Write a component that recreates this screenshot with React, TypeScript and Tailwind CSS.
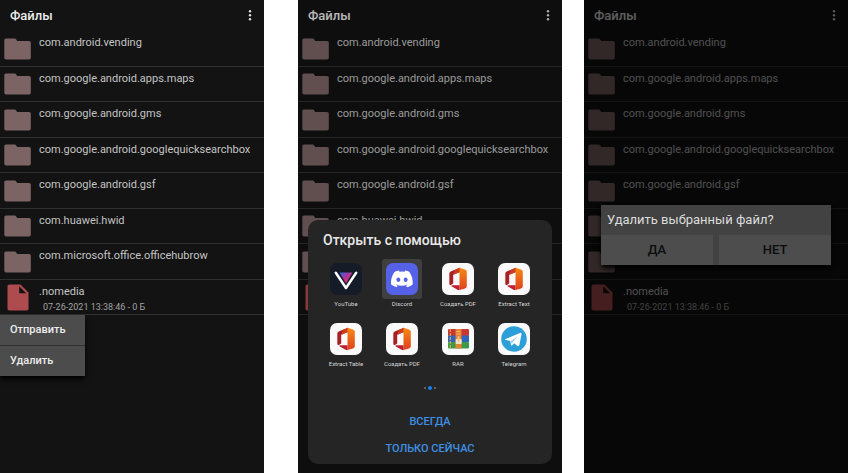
import { useId, type ReactNode } from "react";

const FOLDERS = [
  "com.android.vending",
  "com.google.android.apps.maps",
  "com.google.android.gms",
  "com.google.android.googlequicksearchbox",
  "com.google.android.gsf",
  "com.huawei.hwid",
  "com.microsoft.office.officehubrow",
];

function FolderIcon() {
  return (
    <svg viewBox="0 0 27 22" className="h-[22px] w-[27px]" aria-hidden="true">
      <path
        d="M2 .5h8.500c.9 0 1.200.3 1.700 1l1 1.500H25c1.200 0 1.800.7 1.800 1.800V19.500c0 1.200-.7 1.900-1.900 1.900H2.200C1 21.400.3 20.700.3 19.500V2.300C.3 1.200.9.5 2 .5z"
        fill="#7d6464"
      />
    </svg>
  );
}

function FileIcon() {
  return (
    <svg viewBox="0 0 22 27" className="h-[27px] w-[22px]" aria-hidden="true">
      <path
        d="M2.500.5h11L21.500 8.500v16c0 1.300-.7 2-2 2h-17c-1.300 0-2-.7-2-2v-22c0-1.300.7-2 2-2z"
        fill="#ad4b4e"
      />
      <path d="M12.200 2.300v7h7z" fill="#131313" />
    </svg>
  );
}

function Screen({ scrim, menu, children }: { scrim?: string; menu?: ReactNode; children?: ReactNode }) {
  return (
    <section className="relative min-w-0 flex-1 overflow-hidden bg-[#131313]">
      <header className="flex h-[31px] items-center justify-between px-[10px]">
        <h1 className="text-[13px] leading-4 font-medium text-[#ececec]">Файлы</h1>
        <button type="button" aria-label="Меню" className="flex h-4 w-2 items-center justify-center">
          <svg viewBox="0 0 4 12" className="h-3 w-1" fill="#dedede" aria-hidden="true">
            <circle cx="2" cy="1.200" r="1.200" />
            <circle cx="2" cy="5.200" r="1.200" />
            <circle cx="2" cy="9.200" r="1.200" />
          </svg>
        </button>
      </header>
      <div className="relative">
        <ul className="grid h-[284px] grid-rows-8">
          {FOLDERS.map((name) => (
            <li key={name} className="flex border-b border-[#303030] pl-1">
              <span className="flex w-[35px] shrink-0 items-end pb-[6px]">
                <FolderIcon />
              </span>
              <span className="pt-1 text-[11px] leading-4 whitespace-nowrap text-[#c4c4c4]">{name}</span>
            </li>
          ))}
          <li className="flex border-b border-[#303030] pl-[7px]">
            <span className="flex w-8 shrink-0 items-end pb-[3px]">
              <FileIcon />
            </span>
            <span className="flex flex-col whitespace-nowrap text-[#c4c4c4]">
              <span className="pt-1 text-[11px] leading-4">.nomedia</span>
              <span className="pl-1 text-[9px] leading-[15px] text-[#a2a2a2]">07-26-2021 13:38:46 - 0 Б</span>
            </span>
          </li>
        </ul>
        {menu}
      </div>
      {scrim && <div className={`absolute inset-0 ${scrim}`} />}
      {children}
    </section>
  );
}

function ContextMenu() {
  return (
    <div className="absolute top-full left-0 flex w-[85px] flex-col gap-px bg-[#303030] text-[11px] font-medium text-[#eeeeee] shadow-md shadow-black">
      <button type="button" className="h-[30px] bg-[#4c4c4c] px-[10px] text-left">Отправить</button>
      <button type="button" className="h-[30px] bg-[#4c4c4c] px-[10px] text-left">Удалить</button>
    </div>
  );
}

function VancedIcon() {
  const id = useId();
  return (
    <svg viewBox="0 0 32 32" className="size-8" aria-hidden="true">
      <defs>
        <linearGradient id={id} x1="0" y1="0" x2="1" y2="1">
          <stop offset="0" stopColor="#2c62e8" />
          <stop offset=".5" stopColor="#b63292" />
          <stop offset="1" stopColor="#f02b55" />
        </linearGradient>
      </defs>
      <rect width="32" height="32" rx="7" fill="#161c27" />
      <path d="M9.500 9.500h13L16 20.500z" fill={`url(#${id})`} />
      <path d="M5.800 9.800 16 25 26.200 9.800" fill="none" stroke="#fff" strokeWidth="2.500" strokeLinecap="round" strokeLinejoin="round" />
    </svg>
  );
}

function DiscordIcon() {
  return (
    <svg viewBox="0 0 32 32" className="size-8" aria-hidden="true">
      <rect width="32" height="32" rx="7" fill="#5562e8" />
      <path
        transform="translate(5 5) scale(.917)"
        fill="#fff"
        d="M20.317 4.370a19.791 19.791 0 0 0-4.885-1.515c-.21.375-.444.864-.608 1.250a18.270 18.270 0 0 0-5.487 0 12.640 12.640 0 0 0-.617-1.250A19.736 19.736 0 0 0 3.677 4.370C.533 9.046-.319 13.580.099 18.058a19.900 19.900 0 0 0 5.993 3.030c.462-.63.874-1.295 1.226-1.994a13.107 13.107 0 0 1-1.872-.892l.372-.292c3.928 1.793 8.180 1.793 12.062 0l.373.292a12.299 12.299 0 0 1-1.873.892c.36.698.772 1.362 1.225 1.993a19.839 19.839 0 0 0 6.002-3.030c.5-5.177-.838-9.674-3.549-13.660zM8.020 15.330c-1.182 0-2.157-1.085-2.157-2.419 0-1.333.956-2.419 2.157-2.419 1.210 0 2.176 1.095 2.157 2.420 0 1.333-.956 2.418-2.157 2.418zm7.975 0c-1.183 0-2.157-1.085-2.157-2.419 0-1.333.955-2.419 2.157-2.419 1.210 0 2.176 1.095 2.157 2.420 0 1.333-.946 2.418-2.157 2.418z"
      />
    </svg>
  );
}

function OfficeIcon() {
  const id = useId();
  return (
    <svg viewBox="0 0 32 32" className="size-8" aria-hidden="true">
      <defs>
        <linearGradient id={id} x1="0" y1="0" x2="0" y2="1">
          <stop offset="0" stopColor="#f58a16" />
          <stop offset="1" stopColor="#e0401c" />
        </linearGradient>
      </defs>
      <rect width="32" height="32" rx="7" fill="#fbfafa" />
      <path d="M18 4.800 9.200 8.200C8 8.700 7.300 9.600 7.300 11v9c0 2 .7 2.500 2 1.700l1.900-1.100V11.800L18 9z" fill="#a52326" />
      <path d="M18 4.800 13 6.700l-1.800 5.100L18 9z" fill="#cf3e1d" />
      <path d="M17.500 4.800 23 6.600c1.200.4 1.800 1.200 1.800 2.400v14c0 1.200-.6 2-1.800 2.400l-5.500 1.700z" fill={`url(#${id})`} />
      <path d="M9.700 22.300h7.800v4.800c-.7.100-1.400-.1-2-.4l-5.200-2.900c-.9-.5-1-1-.6-1.500z" fill="#c01f2e" />
    </svg>
  );
}

function RarIcon() {
  return (
    <svg viewBox="0 0 32 32" className="size-8" aria-hidden="true">
      <rect width="32" height="32" rx="7" fill="#fafafa" />
      <rect x="6" y="6" width="21" height="7" rx="1" fill="#c93735" />
      <rect x="6" y="12.500" width="21" height="6.500" fill="#3264be" />
      <rect x="6" y="19" width="21" height="6.500" rx="1" fill="#3d9b48" />
      <path d="M8.300 6v19.500" stroke="#dba943" strokeWidth="1.200" strokeDasharray="3 1" />
      <path d="M13.500 6h6v19.500h-6z" fill="#e48535" />
      <path d="M14.500 8.500h4M14.500 11h4" stroke="#f3b069" />
      <rect x="13.700" y="16" width="6" height="5" rx="1" fill="#f3e4c4" />
      <rect x="15.600" y="13" width="2" height="6" rx="1" fill="#e9c57d" />
    </svg>
  );
}

function TelegramIcon() {
  return (
    <svg viewBox="0 0 32 32" className="size-8" aria-hidden="true">
      <rect width="32" height="32" rx="7" fill="#fafafa" />
      <circle cx="16" cy="16" r="12.800" fill="#2d9fd8" />
      <path d="M7.500 16 22 10c1-.4 1.700.1 1.500 1.200l-2.200 11c-.2 1-.9 1.200-1.700.7l-3.500-2.600-1.900 1.900c-.7.700-1.200.4-1.300-.4l-.6-3.700-4.800-1.300c-.7-.2-.7-.5 0-.8z" fill="#fff" />
      <path d="m12.700 18 7.300-4.800-5.400 6-.7 2.300z" fill="#a5cfe8" />
    </svg>
  );
}

const APPS = [
  { name: "YouTube", icon: <VancedIcon /> },
  { name: "Discord", icon: <DiscordIcon />, selected: true },
  { name: "Создать PDF", icon: <OfficeIcon /> },
  { name: "Extract Text", icon: <OfficeIcon /> },
  { name: "Extract Table", icon: <OfficeIcon /> },
  { name: "Создать PDF", icon: <OfficeIcon /> },
  { name: "RAR", icon: <RarIcon /> },
  { name: "Telegram", icon: <TelegramIcon /> },
];

function OpenWithDialog() {
  return (
    <div role="dialog" aria-label="Открыть с помощью" className="absolute inset-x-[10px] bottom-[9px] flex flex-col rounded-[10px] bg-[#252525] pt-[10px] pb-px">
      <h2 className="pl-[15px] text-[14px] leading-5 font-medium text-[#e8e8e8]">Открыть с помощью</h2>
      <div className="grid grid-cols-4 gap-y-[11px] px-[10px] pt-[9px]">
        {APPS.map((app, i) => (
          <button key={i} type="button" className="flex flex-col items-center">
            <span className={app.selected ? "rounded-[3px] bg-[#3f3f3f] p-1" : "p-1"}>{app.icon}</span>
            <span className="text-[6px] leading-[9px] whitespace-nowrap text-[#d5d5d5]">{app.name}</span>
          </button>
        ))}
      </div>
      <div className="flex h-[39px] items-center justify-center gap-[2px]">
        <span className="size-[2px] rounded-full bg-[#777777]" />
        <span className="size-1 rounded-full bg-[#1683f5]" />
        <span className="size-[2px] rounded-full bg-[#777777]" />
      </div>
      <div className="flex flex-col pt-[2px] text-[11px] font-medium text-[#3e90e4]">
        <button type="button" className="h-[27px]">ВСЕГДА</button>
        <button type="button" className="h-[27px]">ТОЛЬКО СЕЙЧАС</button>
      </div>
    </div>
  );
}

function DeleteDialog() {
  return (
    <div className="absolute inset-0 flex items-center px-[17px] pb-[3px]">
      <div role="dialog" aria-label="Удалить выбранный файл?" className="w-full bg-[#424242] shadow-md shadow-black">
        <p className="pl-[6px] text-[13px] leading-[30px] text-[#dcdcdc]">Удалить выбранный файл?</p>
        <div className="grid grid-cols-2 gap-[6px] text-[13px] font-medium text-[#0c0c0c]">
          <button type="button" className="h-[30px] bg-[#4d4d4d]">ДА</button>
          <button type="button" className="h-[30px] bg-[#4d4d4d]">НЕТ</button>
        </div>
      </div>
    </div>
  );
}

export default function App() {
  return (
    <main className="flex min-h-screen bg-white font-[Roboto,sans-serif]">
      <Screen menu={<ContextMenu />} />
      <div className="w-[34px] shrink-0" />
      <Screen scrim="bg-black/22">
        <OpenWithDialog />
      </Screen>
      <div className="w-[22px] shrink-0" />
      <Screen scrim="bg-black/60">
        <DeleteDialog />
      </Screen>
    </main>
  );
}
